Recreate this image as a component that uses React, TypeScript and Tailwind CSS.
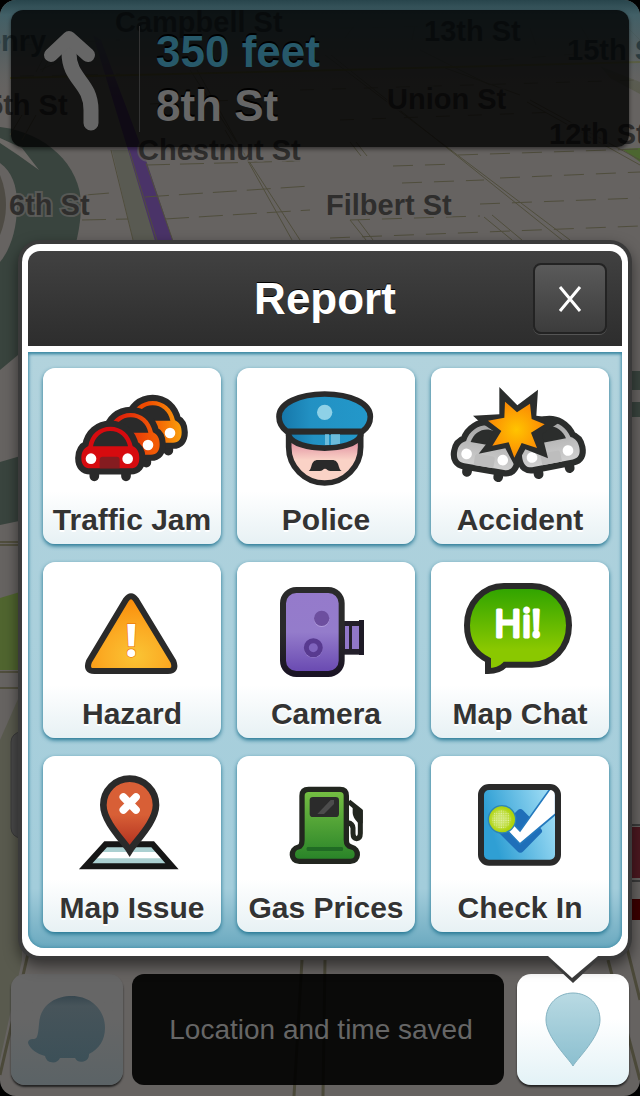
import type { ReactNode } from 'react'

const INK = '#2a2a2a'

function StreetMap() {
  return (
    <svg viewBox="0 0 640 1096" preserveAspectRatio="xMidYMin slice" className="absolute inset-0 -z-10 h-full w-full" aria-hidden="true">
      <defs>
        <linearGradient id="sky" x1="0" y1="0" x2="0" y2="1">
          <stop offset="0" stopColor="#28454c" />
          <stop offset="0.15" stopColor="#426067" />
          <stop offset="0.5" stopColor="#4c5d61" stopOpacity="0.7" />
          <stop offset="1" stopColor="#666462" stopOpacity="0" />
        </linearGradient>
      </defs>
      <rect width="640" height="1096" fill="#666361" />
      <path d="M0 127C45 132 81 165 81 205C81 245 60 300 30 345L0 370Z" fill="#39443e" />
      <path d="M0 163C12 172 17 185 17 205C17 230 10 250 0 262Z" fill="#666361" />
      <path d="M0 175Q6 190 6 205T0 235Z" fill="#4e4b44" />
      <path d="M0 138L22 148L39 170L18 155L0 143Z" fill="#6c6966" />
      <path d="M0 462L24 455V520L0 525Z" fill="#39443e" />
      <path d="M0 598L20 592V670H0Z" fill="#50652f" />
      <path d="M112 150H129L160 248H135Z" fill="#595a52" />
      <path d="M93 35L101 40L146 160L174 244H156L128 150Z" fill="#4a3368" />
      <path d="M622 149L640 148V162Z" fill="#4c6630" />
      <path d="M600 66L640 82V94L610 78Z" fill="#595a4c" />
      <g fill="none" stroke="#504e3d" strokeWidth="1">
        <path d="M111 150L134 244M129 150L158 244M146 163L174 244" />
        <path d="M50 45L36 72M57 45L42 72M22 115L10 135M36 115L22 140M58 62L40 70" />
        <path d="M190 70L300 240M197 70L292 240M225 130L234 145" />
        <path d="M325 55L570 240M331 55L562 240M350 142L361 156M356 142L367 156" />
        <path d="M415 25L412 40M530 28L536 45M420 50L490 85M445 68L520 95M362 15L345 38" />
        <path d="M530 100L640 160M527 102L640 165M610 10L640 40M580 25L590 42" />
        <path d="M350 220L366 240M358 220L373 240M484 217L512 240M492 215L522 240" />
        <path d="M146 165L300 161M85 195L110 193M145 197L310 186M82 220L128 219M165 219L310 210" strokeDasharray="24 10" />
        <path d="M393 166L456 164M458 155L640 149M402 183L484 180M500 178L640 172M480 204L640 198M350 220L480 216M330 238L640 226" strokeDasharray="20 12" />
        <path d="M20 76L120 74M300 90L640 80M340 120L560 112M150 104L280 98M20 45L120 40M340 28L440 26M500 60L600 52" strokeDasharray="14 18" />
        <path d="M0 542H22M0 545H22M0 672H22M0 688H22" strokeWidth="2" />
      </g>
      <path d="M10 78L300 71L640 62" fill="none" stroke="#615c22" strokeWidth="2" />
      <g fill="none" stroke="#4b4939" strokeWidth="3">
        <path d="M302 960L294 1096M325 960L323 1096M30 945L0 1075M608 960L640 1080M625 940L640 1000" />
      </g>
      <path d="M0 740L22 690V960L0 1060Z" fill="#595a4e" />
      <g stroke="#3a3a3a" strokeWidth="1">
        <rect x="11" y="732" width="30" height="106" rx="10" fill="#4a4a4a" />
        <path d="M620 825H640M620 881H640" strokeWidth="2" />
      </g>
      <rect x="626" y="827" width="14" height="51" fill="#4b1820" />
      <rect x="626" y="899" width="14" height="21" fill="#3b0000" />
      <path d="M632 371H640V390H632ZM632 402H640V417H632Z" fill="#39443e" />
      <g fill="#2f2e2d" stroke="#666361" strokeWidth="4" paintOrder="stroke" strokeOpacity="0.7" className="font-['Liberation_Sans'] text-[29px] font-bold">
        <text x="9" y="215">6th St</text>
        <text x="326" y="215">Filbert St</text>
        <text x="138" y="160">Chestnut St</text>
        <text x="-13" y="115">5th St</text>
        <text x="387" y="109">Union St</text>
        <text x="549" y="144">12th St</text>
      </g>
      <rect width="640" height="100" fill="url(#sky)" />
      <g fill="#2b3b3f" className="font-['Liberation_Sans'] text-[29px] font-bold">
        <text x="-36" y="51">Henry</text>
        <text x="115" y="32">Campbell St</text>
        <text x="424" y="41">13th St</text>
        <text x="567" y="60">15th St</text>
      </g>
    </svg>
  )
}

function Icon({ top = 6, children }: { top?: number; children: ReactNode }) {
  return (
    <svg viewBox={`9 ${top} 534 390`} className="h-[130px] w-full" aria-hidden="true">
      {children}
    </svg>
  )
}

function Car({ transform, fill, ink = INK, grille }: { transform?: string; fill: string; ink?: string; grille: string }) {
  return (
    <g transform={transform}>
      <path d="M163 322V334M258 322V334" stroke={ink} strokeWidth="29" strokeLinecap="round" />
      <path
        d="M145 243C150 208 178 185 211 185S271 208 278 243C292 250 298 262 298 279C298 300 289 310 272 310H151C134 310 124 300 124 279C124 262 131 250 145 243Z"
        fill={fill}
        stroke={ink}
        strokeWidth="37"
        strokeLinejoin="round"
        paintOrder="stroke"
      />
      <path d="M159 244C164 216 184 198 211 198S258 216 264 244Z" fill={ink} />
      <path d="M179 310V284Q179 275 188 275H230Q239 275 239 284V310Z" fill={grille} />
      <circle cx="153" cy="281" r="16" fill="#fff" />
      <circle cx="263" cy="281" r="16" fill="#fff" />
    </g>
  )
}

function TrafficJamIcon() {
  return (
    <Icon top={9}>
      <defs>
        <linearGradient id="car-back">
          <stop offset="0.4" stopColor="#f04a00" />
          <stop offset="1" stopColor="#f99f0c" />
        </linearGradient>
        <linearGradient id="car-mid">
          <stop offset="0.1" stopColor="#d80d0d" />
          <stop offset="0.9" stopColor="#f25a05" />
        </linearGradient>
      </defs>
      <Car transform="translate(127 -77)" fill="url(#car-back)" grille="#b03a00" />
      <Car transform="translate(61 -41)" fill="url(#car-mid)" grille="#a01a0a" />
      <Car fill="#d60b0f" grille="#851c20" />
    </Icon>
  )
}

function PoliceIcon() {
  return (
    <Icon top={9}>
      <defs>
        <linearGradient id="skin" x1="0" y1="0" x2="0" y2="1">
          <stop offset="0.25" stopColor="#e49aa6" />
          <stop offset="0.55" stopColor="#fad2c6" />
        </linearGradient>
        <linearGradient id="hat">
          <stop offset="0" stopColor="#1575a8" />
          <stop offset="0.35" stopColor="#2291c3" />
          <stop offset="1" stopColor="#2398ca" />
        </linearGradient>
      </defs>
      <g stroke={INK} strokeWidth="17" strokeLinejoin="round">
        <path d="M164 200V246C164 305 212 354 272 354S380 305 380 246V200Z" fill="url(#skin)" />
        <path d="M164 200V211C185 262 359 262 380 211V200Z" fill="url(#hat)" />
        <path d="M158 199C143 187 135 172 135 155C135 115 195 87 272 87S409 115 409 155C409 172 401 187 386 199Z" fill="url(#hat)" />
      </g>
      <path d="M273 208H285V240H273ZM291 208H318V236L291 240Z" fill="#6cbcdc" />
      <circle cx="272" cy="142" r="23" fill="#8ed1e7" />
      <path d="M224 318C236 312 228 285 252 285H294C318 285 311 312 323 318H290C282 318 278 311 273 311S265 318 257 318Z" fill={INK} />
    </Icon>
  )
}

function AccidentIcon() {
  return (
    <Icon top={9}>
      <defs>
        <linearGradient id="car-grey" x1="0" y1="0" x2="0" y2="1">
          <stop offset="0" stopColor="#a3a3a3" />
          <stop offset="1" stopColor="#d0d0d0" />
        </linearGradient>
        <radialGradient id="burst">
          <stop offset="0" stopColor="#ffc400" />
          <stop offset="1" stopColor="#fb8a04" />
        </radialGradient>
      </defs>
      <Car transform="translate(170 276) rotate(9.6) translate(-208 -281)" fill="url(#car-grey)" ink="#2b2d2c" grille="#bdbdbd" />
      <Car transform="translate(366 267) rotate(-11) translate(-208 -281)" fill="url(#car-grey)" ink="#2b2d2c" grille="#bdbdbd" />
      <path d="M214 66L268 121L330 74L325 152L362 157L395 172L342 208L360 280L292 253L262 306L232 250L152 266L177 234L196 198L152 168L135 152L214 148Z" fill="#2b2d2c" />
      <path d="M231 110L267 142L306 116L311 162L350 178L309 203L327 249L281 234L259 278L242 232L193 242L220 198L180 167L229 158Z" fill="url(#burst)" />
    </Icon>
  )
}

function HazardIcon() {
  return (
    <Icon>
      <defs>
        <radialGradient id="hazard" cx="0.55" cy="0.8" r="0.8">
          <stop offset="0" stopColor="#fac434" />
          <stop offset="0.45" stopColor="#fbac24" />
          <stop offset="1" stopColor="#fa8a08" />
        </radialGradient>
      </defs>
      <path d="M258 119Q273 98 288 119L400 304Q411 333 384 333H163Q136 333 147 304Z" fill="url(#hazard)" stroke={INK} strokeWidth="18" />
      <text x="274" y="290" textAnchor="middle" fill="#fff" stroke="#f07d0c" strokeWidth="4" paintOrder="stroke" className="font-['Open_Sans'] text-[138px] font-bold">!</text>
    </Icon>
  )
}

function CameraIcon() {
  return (
    <Icon>
      <defs>
        <linearGradient id="camera" x1="0" y1="0" x2="0" y2="1">
          <stop offset="0" stopColor="#957acb" />
          <stop offset="0.5" stopColor="#947ccb" />
          <stop offset="1" stopColor="#6747b0" />
        </linearGradient>
        <linearGradient id="camera-edge" x1="0" y1="0" x2="0" y2="1">
          <stop offset="0.5" stopColor="#2a2a2a" />
          <stop offset="1" stopColor="#1a1424" />
        </linearGradient>
      </defs>
      <path d="M325 183H375V284H325Z" fill="#231f2a" />
      <path d="M333 198H345V267H333ZM354 198H375V267H354Z" fill="#9077c8" />
      <path d="M375 180H390V285H375Z" fill="#1e1a26" />
      <rect x="147" y="90" width="176" height="252" rx="40" fill="url(#camera)" stroke="url(#camera-edge)" strokeWidth="18" />
      <circle cx="263" cy="178" r="23" fill="#b19cdc" />
      <circle cx="263" cy="175" r="23" fill="#6d4f9f" />
      <circle cx="238" cy="266" r="28" fill="#9a82cf" />
      <circle cx="238" cy="263" r="21" fill="#7f64bd" stroke="#583a90" strokeWidth="15" />
    </Icon>
  )
}

function ChatIcon() {
  return (
    <Icon>
      <defs>
        <linearGradient id="chat" x1="0" y1="0" x2="0" y2="1">
          <stop offset="0.05" stopColor="#33a500" />
          <stop offset="0.75" stopColor="#8ac800" />
        </linearGradient>
      </defs>
      <path
        d="M228 78H312C375 78 423 130 423 196S375 314 312 314H231C218 328 205 333 180 333V300C140 280 117 245 117 196C117 130 165 78 228 78Z"
        fill="url(#chat)"
        stroke={INK}
        strokeWidth="18"
      />
      <text x="269" y="230" textAnchor="middle" fill="#fff" stroke="#fff" strokeWidth="9" strokeLinejoin="round" className="font-['Noto_Sans'] text-[112px]">Hi!</text>
    </Icon>
  )
}

function MapIssueIcon() {
  return (
    <Icon>
      <defs>
        <linearGradient id="issue" x1="0" y1="0" x2="0" y2="1">
          <stop offset="0.5" stopColor="#d85f36" />
          <stop offset="0.95" stopColor="#b0301f" />
        </linearGradient>
      </defs>
      <path d="M197 271H338L396 337H137Z" fill="#abd0d1" />
      <path d="M182 294H355L372 313H165Z" fill="#fff" />
      <path d="M197 271H338L396 337H137Z" fill="none" stroke="#161616" strokeWidth="18" />
      <path d="M269 290C252 262 190 204 190 153A79 79 0 0 1 348 153C348 204 286 262 269 290Z" fill="url(#issue)" stroke={INK} strokeWidth="20" />
      <path d="M250 129L288 168M288 129L250 168" stroke="#fff" strokeWidth="23" strokeLinecap="round" />
    </Icon>
  )
}

function GasIcon() {
  return (
    <Icon>
      <defs>
        <linearGradient id="pump" x1="0" y1="0" x2="0" y2="1">
          <stop offset="0" stopColor="#77c043" />
          <stop offset="1" stopColor="#278228" />
        </linearGradient>
      </defs>
      <path d="M344 143L379 171V238Q379 254 368 254T357 238V222Q356 208 342 206" fill="none" stroke="#22261f" strokeWidth="15" strokeLinejoin="round" />
      <path d="M356 160L386 168V208L372 206Q356 190 356 176Z" fill="#22261f" />
      <path
        d="M224 106H318Q337 106 337 125V258C337 272 342 277 352 279C377 284 376 322 349 322H196C169 322 168 284 193 279C201 277 204 272 204 258V125Q204 106 224 106Z"
        fill="url(#pump)"
        stroke="#22261f"
        strokeWidth="16"
      />
      <rect x="227" y="129" width="88" height="60" rx="10" fill="#2b2b2b" />
      <path d="M250 180L290 138H300V150L270 180Z" fill="#4c4c4c" />
      <rect x="218" y="279" width="109" height="12" rx="4" fill="#206b24" />
    </Icon>
  )
}

function CheckInIcon() {
  return (
    <Icon>
      <defs>
        <linearGradient id="checkin" x1="0" y1="0.3" x2="1" y2="0">
          <stop offset="0.05" stopColor="#2f9fd4" />
          <stop offset="1" stopColor="#b0e6fa" />
        </linearGradient>
        <radialGradient id="ball" cx="0.45" cy="0.5" r="0.5">
          <stop offset="0.3" stopColor="#cbe468" />
          <stop offset="0.9" stopColor="#aed40c" />
        </radialGradient>
        <pattern id="dimples" width="7" height="7" patternUnits="userSpaceOnUse">
          <circle cx="3" cy="3" r="2" fill="#e0efa0" />
        </pattern>
      </defs>
      <rect x="159" y="99" width="231" height="227" rx="24" fill="url(#checkin)" />
      <path d="M269 169Q277 161 285 169L339 224Q346 231 339 238L286 292Q277 301 268 292L214 238Q207 231 214 224Z" fill="#1f6fb9" />
      <path d="M238 230L276 270L383 180V102H368L276 231L256 210Z" fill="#fff" stroke="#2479bd" strokeWidth="5" />
      <circle cx="222" cy="196" r="41" fill="url(#ball)" stroke="#2f86b4" strokeWidth="4" />
      <circle cx="220" cy="196" r="28" fill="url(#dimples)" />
      <rect x="159" y="99" width="231" height="227" rx="24" fill="none" stroke={INK} strokeWidth="18" />
    </Icon>
  )
}

const reports = [
  { label: 'Traffic Jam', icon: <TrafficJamIcon /> },
  { label: 'Police', icon: <PoliceIcon /> },
  { label: 'Accident', icon: <AccidentIcon /> },
  { label: 'Hazard', icon: <HazardIcon /> },
  { label: 'Camera', icon: <CameraIcon /> },
  { label: 'Map Chat', icon: <ChatIcon /> },
  { label: 'Map Issue', icon: <MapIssueIcon /> },
  { label: 'Gas Prices', icon: <GasIcon /> },
  { label: 'Check In', icon: <CheckInIcon /> },
]

function Directions() {
  return (
    <header className="mx-[11px] mt-[10px] flex h-[137px] items-center rounded-xl bg-black/80 shadow-[0_2px_4px_rgba(0,0,0,0.5)]">
      <div className="flex w-[129px] shrink-0 border-r border-[#333] pl-8">
        <svg viewBox="0 0 56 106" className="h-[106px] w-14" fill="none" stroke="#666" strokeLinecap="round" aria-label="Bear left">
          <path d="M26 14V27C26 54 48 56 48 84V97" strokeWidth="15" />
          <path d="M8 29L26 12L45 29" strokeWidth="14" strokeLinejoin="round" />
        </svg>
      </div>
      <div className="pl-4 text-[44px] leading-[54px] font-bold [text-shadow:0_-2px_0_#000]">
        <p className="text-[#27596a]">350 feet</p>
        <p className="text-[#666]">8th St</p>
      </div>
    </header>
  )
}

function ReportDialog() {
  return (
    <section role="dialog" aria-labelledby="report-title" className="relative z-10 mt-[97px] mr-3 ml-[22px] rounded-[18px] bg-white px-[6px] pt-[7px] pb-2 shadow-[0_0_0_4px_#3a3a3a,0_6px_14px_4px_rgba(0,0,0,0.5)]">
      <div className="relative flex h-[95px] items-center justify-center rounded-t-xl bg-linear-to-b from-[#414141] to-[#2d2d2d]">
        <h1 id="report-title" className="text-[44px] leading-[54px] font-bold text-white [text-shadow:0_-1px_0_#000]">Report</h1>
        <button
          type="button"
          aria-label="Close"
          className="absolute right-[15px] flex h-[71px] w-[74px] items-center justify-center rounded-lg border-2 border-[#232323] bg-linear-to-b from-[#5a5a5a] to-[#3c3c3c] shadow-[0_1px_0_#555]"
        >
          <svg viewBox="0 0 24 26" className="h-[26px] w-6" stroke="#fff" strokeWidth="3" aria-hidden="true">
            <path d="M2 1L22 25M22 1L2 25" />
          </svg>
        </button>
      </div>
      <div className="mt-[6px] grid grid-cols-3 gap-x-4 gap-y-[18px] rounded-b-2xl bg-linear-to-b from-[#b2d3dd] via-[#a3cddb] via-90% to-[#6aa9bf] pt-4 pr-[13px] pb-4 pl-[15px] shadow-[inset_0_2px_3px_#3f8ba5,inset_0_0_4px_#3f8ba5]">
        {reports.map((r) => (
          <button
            key={r.label}
            type="button"
            className="flex h-44 flex-col items-center rounded-xl bg-linear-to-b from-white from-70% to-[#e7f1f4] shadow-[0_2px_4px_#1f7390]"
          >
            {r.icon}
            <span className="text-[30px] leading-[44px] font-bold whitespace-nowrap text-[#333] [text-shadow:0_2px_0_#fff]">{r.label}</span>
          </button>
        ))}
      </div>
      <svg viewBox="0 0 62 30" className="absolute right-[24px] bottom-[-27px] h-[30px] w-[62px]" aria-hidden="true">
        <path d="M2 3H60L31 30Z" fill="#3a3a3a" />
        <path d="M6 0V3L30 25L56 3V0Z" fill="#fff" />
      </svg>
    </section>
  )
}

function BottomBar() {
  return (
    <footer className="mx-[11px] mt-[18px] mb-[11px] flex h-[111px]">
      <button type="button" aria-label="Menu" className="flex w-28 items-center justify-center rounded-[14px] bg-linear-to-b from-[#666] from-40% to-[#5b6366] shadow-[0_2px_2px_#222]">
        <svg viewBox="0 0 78 68" className="h-[68px] w-[78px]" aria-hidden="true">
          <defs>
            <linearGradient id="wazer" x1="0" y1="0" x2="0" y2="1">
              <stop offset="0" stopColor="#37474f" />
              <stop offset="0.15" stopColor="#47545a" />
              <stop offset="1" stopColor="#3c5058" />
            </linearGradient>
          </defs>
          <path
            d="M11 28C12 10 26 0 44 0C62 0 77 13 77 32C77 44 71 53 61 58A7.500 7.500 0 0 1 47 62H32A8 8 0 0 1 17 60C9 58 2 53 0 47C0 43 4 43 6 43C9 43 10 40 11 28Z"
            fill="url(#wazer)"
          />
        </svg>
      </button>
      <p className="mr-[13px] ml-[9px] flex flex-1 items-center justify-center rounded-xl bg-black/90 pt-px pl-[6px] text-[28px] leading-8 text-[#666]">
        Location and time saved
      </p>
      <button type="button" aria-label="Report" className="flex w-28 items-center justify-center rounded-[14px] bg-linear-to-b from-white from-40% to-[#e3f2f6] shadow-[0_2px_2px_#222]">
        <svg viewBox="0 0 56 76" className="h-[76px] w-14" aria-hidden="true">
          <defs>
            <linearGradient id="pin" x1="0" y1="0" x2="0" y2="1">
              <stop offset="0" stopColor="#b9dae3" />
              <stop offset="1" stopColor="#8bbfcf" />
            </linearGradient>
          </defs>
          <path d="M28 74C24 67 1 45 1 28C1 12 13 1 28 1S55 12 55 28C55 45 32 67 28 74Z" fill="url(#pin)" stroke="#84b3c2" />
        </svg>
      </button>
    </footer>
  )
}

export default function App() {
  return (
    <div className="min-h-screen bg-black font-['Liberation_Sans',sans-serif]">
      <main className="relative isolate flex min-h-screen flex-col overflow-hidden rounded-[16px]">
        <StreetMap />
        <Directions />
        <ReportDialog />
        <BottomBar />
      </main>
    </div>
  )
}
